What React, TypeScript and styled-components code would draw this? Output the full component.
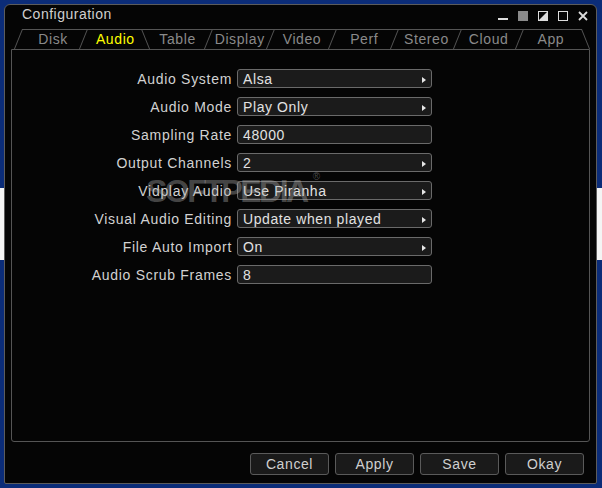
import React, { useState } from "react";
import styled, { createGlobalStyle } from "styled-components";

const GlobalStyle = createGlobalStyle`
  body {
    margin: 0;
    background: linear-gradient(
      to bottom,
      #0b2c78 0px,
      #0b2c78 188px,
      #f4f4f4 188px,
      #f4f4f4 260px,
      #0b2c78 260px
    );
    font-family: "Liberation Sans", Arial, sans-serif;
  }
`;

const Page = styled.div`
  width: 602px;
  height: 488px;
  display: flex;
  box-sizing: border-box;
  padding: 4px 5px 4px 4px;
`;

const Window = styled.div`
  flex: 1;
  display: flex;
  flex-direction: column;
  position: relative;
  background: #050505;
  border: 1px solid #5c5c5c;
  border-radius: 6px 6px 2px 2px;
`;

const TitleBar = styled.div`
  height: 22px;
  display: flex;
  align-items: flex-start;
  justify-content: space-between;
  padding: 1px 8px 0 17px;
`;

const Title = styled.span`
  color: #cfcfcf;
  font-size: 14px;
  letter-spacing: 0.5px;
`;

const Controls = styled.div`
  display: flex;
  align-items: center;
  gap: 10px;
  margin-top: 5px;
  color: #dcdcdc;
`;

const TabBar = styled.div`
  height: 21px;
  margin: 0 14px 0 17px;
  padding-top: 1px;
  box-sizing: border-box;
`;

const TabStrip = styled.div`
  position: relative;
  display: flex;
  height: 19px;
  border-top: 1px solid #555;

  &::before,
  &::after {
    content: "";
    position: absolute;
    top: -1px;
    height: 20px;
    border-left: 1px solid #555;
  }
  &::before {
    left: -4px;
    transform: skewX(-22deg);
  }
  &::after {
    right: -4px;
    transform: skewX(22deg);
  }
`;

const Tab = styled.div<{ $active?: boolean; $mirror?: boolean; $last?: boolean }>`
  position: relative;
  flex: 1;
  display: flex;
  align-items: center;
  justify-content: center;
  padding-bottom: 1px;
  font-size: 14px;
  letter-spacing: 0.6px;
  color: ${(p) => (p.$active ? "#ffff00" : "#8a8a8a")};
  cursor: default;

  &::after {
    content: "";
    display: ${(p) => (p.$last ? "none" : "block")};
    position: absolute;
    right: 0;
    top: -1px;
    height: 20px;
    border-left: 1px solid #555;
    transform: skewX(${(p) => (p.$mirror ? "22deg" : "-22deg")});
  }
`;

const Panel = styled.div`
  flex: 1;
  margin: 0 6px;
  border: 1px solid #555;
  border-radius: 0 0 3px 3px;
  padding-top: 19px;
  position: relative;
`;

const Form = styled.div`
  display: grid;
  grid-template-columns: 220px 195px;
  column-gap: 5px;
  row-gap: 9px;
`;

const Label = styled.div`
  height: 19px;
  display: flex;
  align-items: center;
  justify-content: flex-end;
  color: #d2d2d2;
  font-size: 14px;
  letter-spacing: 0.7px;
  white-space: nowrap;
`;

const Field = styled.div`
  height: 19px;
  box-sizing: border-box;
  display: flex;
  align-items: center;
  justify-content: space-between;
  padding: 0 5px 0 5px;
  background: #1b1b1b;
  border: 1px solid #6a6a6a;
  border-radius: 3px;
  color: #e2e2e2;
  font-size: 14px;
  letter-spacing: 0.6px;
  white-space: nowrap;
`;

const Arrow = styled.span`
  width: 0;
  height: 0;
  margin-top: 3px;
  border-top: 3px solid transparent;
  border-bottom: 3px solid transparent;
  border-left: 4px solid #e6e6e6;
`;

const Watermark = styled.div`
  position: absolute;
  left: 134px;
  top: 121px;
  font-size: 32px;
  font-weight: bold;
  letter-spacing: -2.5px;
  color: rgba(175, 175, 175, 0.4);
  pointer-events: none;

  sup {
    font-size: 10px;
    font-weight: normal;
    vertical-align: 22px;
    margin-left: 6px;
  }
`;

const ButtonRow = styled.div`
  height: 41px;
  display: flex;
  justify-content: flex-end;
  align-items: flex-start;
  gap: 6px;
  padding: 11px 12px 0 0;
  box-sizing: border-box;
`;

const Button = styled.button`
  width: 79px;
  height: 22px;
  background: #1a1a1a;
  border: 1px solid #5a5a5a;
  border-radius: 3px;
  color: #cfcfcf;
  font-family: "Liberation Sans", Arial, sans-serif;
  font-size: 14px;
  letter-spacing: 0.6px;
  padding: 0;
`;

const tabs = ["Disk", "Audio", "Table", "Display", "Video", "Perf", "Stereo", "Cloud", "App"];

const rows: { label: string; value: string; menu: boolean }[] = [
  { label: "Audio System", value: "Alsa", menu: true },
  { label: "Audio Mode", value: "Play Only", menu: true },
  { label: "Sampling Rate", value: "48000", menu: false },
  { label: "Output Channels", value: "2", menu: true },
  { label: "Vidplay Audio", value: "Use Piranha", menu: true },
  { label: "Visual Audio Editing", value: "Update when played", menu: true },
  { label: "File Auto Import", value: "On", menu: true },
  { label: "Audio Scrub Frames", value: "8", menu: false },
];

const WindowControls = () => (
  <Controls>
    <svg width="10" height="10" viewBox="0 0 10 10">
      <rect x="0" y="7" width="10" height="2" fill="#dcdcdc" />
    </svg>
    <svg width="10" height="10" viewBox="0 0 10 10">
      <rect x="0" y="0" width="10" height="10" fill="#8a8a8a" />
    </svg>
    <svg width="10" height="10" viewBox="0 0 10 10">
      <rect x="0.5" y="0.5" width="9" height="9" fill="none" stroke="#dcdcdc" />
      <polygon points="0,10 10,0 10,10" fill="#dcdcdc" />
    </svg>
    <svg width="10" height="10" viewBox="0 0 10 10">
      <rect x="0.5" y="0.5" width="9" height="9" fill="none" stroke="#dcdcdc" />
    </svg>
    <svg width="10" height="10" viewBox="0 0 10 10">
      <path d="M1 1 L9 9 M9 1 L1 9" stroke="#dcdcdc" strokeWidth="1.8" />
    </svg>
  </Controls>
);

export default function App() {
  const [active, setActive] = useState(1);

  return (
    <>
      <GlobalStyle />
      <Page>
        <Window>
          <TitleBar>
            <Title>Configuration</Title>
            <WindowControls />
          </TitleBar>

          <TabBar>
            <TabStrip>
              {tabs.map((t, i) => (
                <Tab
                  key={t}
                  $active={i === active}
                  $mirror={i === active}
                  $last={i === tabs.length - 1}
                  onClick={() => setActive(i)}
                >
                  {t}
                </Tab>
              ))}
            </TabStrip>
          </TabBar>

          <Panel>
            <Form>
              {rows.map((r) => (
                <React.Fragment key={r.label}>
                  <Label>{r.label}</Label>
                  <Field>
                    <span>{r.value}</span>
                    {r.menu && <Arrow />}
                  </Field>
                </React.Fragment>
              ))}
            </Form>
            <Watermark>
              SOFTPEDIA<sup>®</sup>
            </Watermark>
          </Panel>

          <ButtonRow>
            <Button>Cancel</Button>
            <Button>Apply</Button>
            <Button>Save</Button>
            <Button>Okay</Button>
          </ButtonRow>
        </Window>
      </Page>
    </>
  );
}
